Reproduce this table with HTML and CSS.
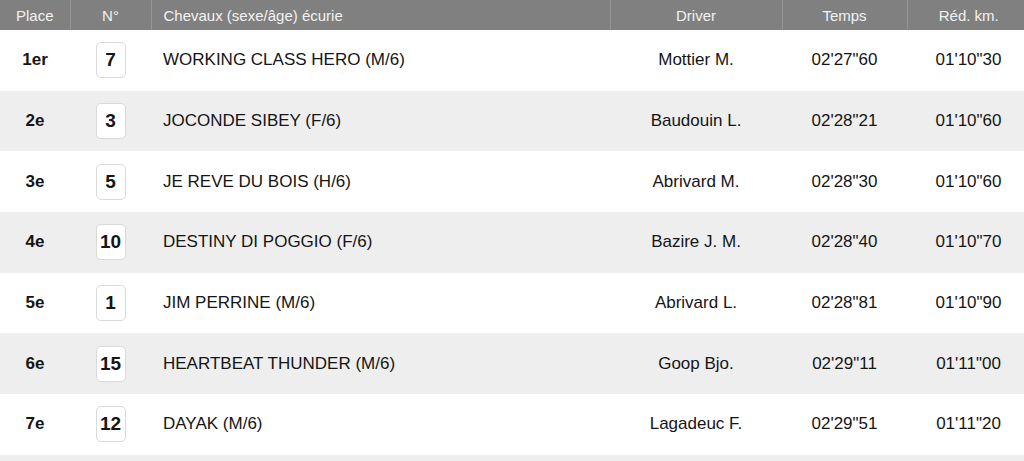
FILE: index.html
```html
<!DOCTYPE html>
<html lang="fr">
<head>
<meta charset="utf-8">
<title>Arrivée</title>
<link rel="stylesheet" href="styles.css">
</head>
<body>
<table class="results">
  <colgroup>
    <col class="c-place"><col class="c-num"><col class="c-horse"><col class="c-driver"><col class="c-time"><col class="c-red">
  </colgroup>
  <thead>
    <tr>
      <th>Place</th><th>N°</th><th class="left">Chevaux (sexe/âge) écurie</th><th>Driver</th><th>Temps</th><th class="red">Réd. km.</th>
    </tr>
  </thead>
  <tbody>
    <tr><td class="place">1er</td><td><span class="num">7</span></td><td class="horse">WORKING CLASS HERO (M/6)</td><td>Mottier M.</td><td>02'27"60</td><td class="red">01'10"30</td></tr>
    <tr><td class="place">2e</td><td><span class="num">3</span></td><td class="horse">JOCONDE SIBEY (F/6)</td><td>Baudouin L.</td><td>02'28"21</td><td class="red">01'10"60</td></tr>
    <tr><td class="place">3e</td><td><span class="num">5</span></td><td class="horse">JE REVE DU BOIS (H/6)</td><td>Abrivard M.</td><td>02'28"30</td><td class="red">01'10"60</td></tr>
    <tr><td class="place">4e</td><td><span class="num">10</span></td><td class="horse">DESTINY DI POGGIO (F/6)</td><td>Bazire J. M.</td><td>02'28"40</td><td class="red">01'10"70</td></tr>
    <tr><td class="place">5e</td><td><span class="num">1</span></td><td class="horse">JIM PERRINE (M/6)</td><td>Abrivard L.</td><td>02'28"81</td><td class="red">01'10"90</td></tr>
    <tr><td class="place">6e</td><td><span class="num">15</span></td><td class="horse">HEARTBEAT THUNDER (M/6)</td><td>Goop Bjo.</td><td>02'29"11</td><td class="red">01'11"00</td></tr>
    <tr><td class="place">7e</td><td><span class="num">12</span></td><td class="horse">DAYAK (M/6)</td><td>Lagadeuc F.</td><td>02'29"51</td><td class="red">01'11"20</td></tr>
    <tr class="more"><td colspan="6"></td></tr>
  </tbody>
</table>
</body>
</html>
```
FILE: styles.css
```css
html, body {
  margin: 0;
  padding: 0;
  background: #ffffff;
}
body {
  font-family: "Liberation Sans", Arial, sans-serif;
  color: #151515;
}
.results {
  width: 1024px;
  border-collapse: collapse;
  table-layout: fixed;
}
.c-place { width: 70px; }
.c-num { width: 81px; }
.c-horse { width: 459px; }
.c-driver { width: 172px; }
.c-time { width: 125px; }
.c-red { width: 117px; }

.results th {
  height: 30px;
  padding: 0;
  background: #808080;
  color: #f2f2f2;
  font-weight: normal;
  font-size: 15px;
  text-align: center;
  border-left: 1px solid #969696;
}
.results th:first-child { border-left: none; }
.results th.left {
  text-align: left;
  padding-left: 12px;
}
.results td {
  height: 60.7px;
  padding: 0;
  text-align: center;
  font-size: 17px;
}
.results th.red,
.results td.red {
  padding-left: 6px;
}
.results tbody tr:nth-child(even) td { background: #eeeeee; }
.results td.place { font-weight: bold; }
.results td.horse {
  text-align: left;
  padding-left: 12px;
}
.num {
  display: inline-flex;
  align-items: center;
  justify-content: center;
  box-sizing: border-box;
  width: 30px;
  height: 36px;
  background: #ffffff;
  border: 1px solid #d9d9d9;
  border-radius: 5px;
  font-weight: bold;
  font-size: 19px;
  vertical-align: middle;
}
.results tr.more td {
  height: 10px;
  background: #e6e6e9;
}
```
